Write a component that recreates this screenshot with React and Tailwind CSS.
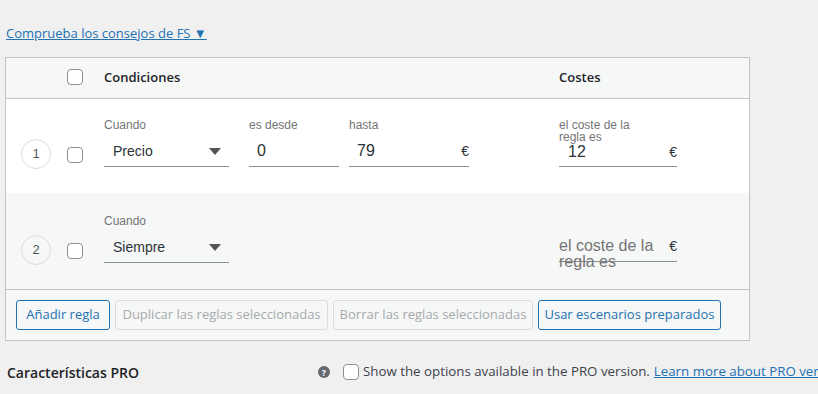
import React from 'react'

const ui = { fontFamily: '"Open Sans", "Noto Sans", sans-serif' }
const field = { fontFamily: '"Liberation Sans", Arial, sans-serif' }

function Checkbox({ className = '' }) {
  return <span className={`block w-4 h-4 shrink-0 rounded-[4px] border border-[#8c8f94] bg-white ${className}`} />
}

function Num({ n }) {
  return (
    <span
      className="mt-[21px] flex w-[30px] h-[30px] shrink-0 items-center justify-center rounded-full border border-[#dcdcde] text-[13px] text-[#50575e]"
      style={field}
    >
      {n}
    </span>
  )
}

function Caret() {
  return (
    <svg className="ml-auto mr-[8px] w-[12px] h-[7px]" viewBox="0 0 12 7">
      <path d="M0 0h12L6 7z" fill="#555" />
    </svg>
  )
}

function Label({ children, className = '' }) {
  return <div className={`h-[14px] text-[12px] leading-[14px] text-[#757575] ${className}`}>{children}</div>
}

function Select({ label, value }) {
  return (
    <div className="w-[125px] shrink-0">
      <Label>{label}</Label>
      <div className="flex h-[35px] items-center pt-[4px] pl-[9px] border-b border-[#8c8f94] text-[14px] text-[#2c3338]">
        <span>{value}</span>
        <Caret />
      </div>
    </div>
  )
}

function Input({ label, value, euro, className = '' }) {
  return (
    <div className={`shrink-0 ${className}`}>
      <Label>{label}</Label>
      <div className="flex h-[35px] items-center pt-[4px] pl-[8px] border-b border-[#8c8f94] text-[16px] text-[#2c3338]">
        <span>{value}</span>
        {euro && <span className="ml-auto text-[14px]">€</span>}
      </div>
    </div>
  )
}

function Btn({ children, disabled, w }) {
  return (
    <div
      className={`flex h-[30px] shrink-0 items-center justify-center rounded-[3px] border bg-[#f6f7f7] text-[13px] whitespace-nowrap ${w} ${
        disabled ? 'border-[#dcdcde] text-[#a7aaad]' : 'border-[#2271b1] text-[#2271b1]'
      }`}
    >
      {children}
    </div>
  )
}

export default function App() {
  return (
    <div className="w-[818px] h-[394px] overflow-hidden bg-[#f0f0f1] pt-[23px] text-[#1d2327]" style={ui}>
      <a className="block ml-[6px] text-[13px] leading-[20px] text-[#2271b1] underline">
        Comprueba los consejos de FS ▼
      </a>

      <div className="mt-[14px] ml-[5px] w-[745px] border border-[#c3c4c7]">
        {/* header */}
        <div className="flex h-[41px] items-center border-b border-[#c3c4c7] bg-[#f6f7f7] pl-[61px] text-[13px] font-semibold">
          <Checkbox className="-mt-[3px]" />
          <div className="ml-[21px] w-[455px] shrink-0">Condiciones</div>
          <div>Costes</div>
        </div>

        {/* rule 1 */}
        <div className="flex h-[94px] items-start bg-white pl-[15px] pt-[19px]" style={field}>
          <Num n="1" />
          <Checkbox className="ml-[16px] mt-[29px]" />
          <div className="ml-[21px] flex w-[455px] shrink-0">
            <Select label="Cuando" value="Precio" />
            <Input label="es desde" value="0" className="ml-[20px] w-[90px]" />
            <Input label="hasta" value="79" euro className="ml-[10px] w-[120px]" />
          </div>
          <div className="w-[118px] shrink-0">
            <div className="h-[14px] w-[80px] pt-[1px] text-[12px] leading-[12px] text-[#757575]">el coste de la regla es</div>
            <div className="flex h-[35px] items-center pt-[6px] pl-[9px] border-b border-[#8c8f94] text-[16px] text-[#2c3338]">
              <span>12</span>
              <span className="ml-auto text-[14px]">€</span>
            </div>
          </div>
        </div>

        {/* rule 2 */}
        <div className="flex h-[97px] items-start border-b border-[#c3c4c7] bg-[#f6f7f7] pl-[15px] pt-[21px]" style={field}>
          <Num n="2" />
          <Checkbox className="ml-[16px] mt-[29px]" />
          <div className="ml-[21px] w-[455px] shrink-0">
            <Select label="Cuando" value="Siempre" />
          </div>
          <div className="w-[118px] shrink-0">
            <div className="h-[14px]" />
            <div className="flex h-[34px] items-start pt-[10px] border-b border-[#8c8f94]">
              <div className="w-[100px] text-[16px] leading-[16px] text-[#757575]">el coste de la regla es</div>
              <span className="ml-auto text-[14px] leading-[16px] text-[#2c3338]">€</span>
            </div>
          </div>
        </div>

        {/* actions */}
        <div className="flex h-[50px] gap-[5px] bg-[#f6f7f7] pl-[10px] pt-[10px]">
          <Btn w="w-[94px]">Añadir regla</Btn>
          <Btn disabled w="w-[213px]">Duplicar las reglas seleccionadas</Btn>
          <Btn disabled w="w-[200px]">Borrar las reglas seleccionadas</Btn>
          <Btn w="w-[183px]">Usar escenarios preparados</Btn>
        </div>
      </div>

      <div className="mt-[21px] flex h-[20px] items-center whitespace-nowrap pl-[7px] text-[13.3px]">
        <div className="w-[311px] shrink-0 text-[14px] font-semibold">Características PRO</div>
        <span className="flex h-[12px] w-[12px] shrink-0 items-center justify-center rounded-full bg-[#646970] text-[9px] font-bold leading-none text-white">?</span>
        <Checkbox className="ml-[13px]" />
        <span className="ml-[4px] shrink-0 text-[#3c434a]">Show the options available in the PRO version.</span>
        <a className="ml-[4px] shrink-0 text-[#2271b1] underline">Learn more about PRO version</a>
      </div>
    </div>
  )
}
